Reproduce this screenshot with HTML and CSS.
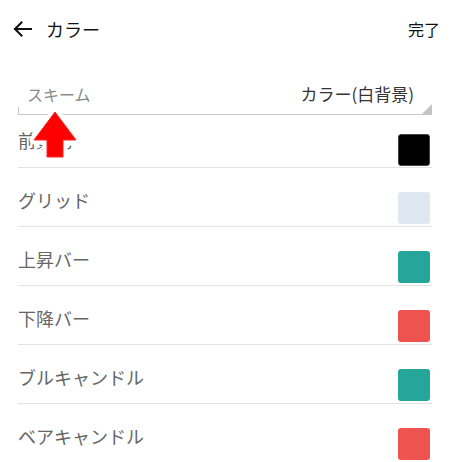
FILE: index.html
```html
<!DOCTYPE html>
<html lang="ja">
<head>
<meta charset="utf-8">
<link rel="stylesheet" href="styles.css">
</head>
<body>
<div class="page">
  <header class="topbar">
    <div class="title-wrap">
      <svg class="back" width="20" height="16" viewBox="0 0 20 16"><path d="M18 8H2M8.5 1.5L2 8l6.5 6.5" fill="none" stroke="#111" stroke-width="2" stroke-linecap="square"/></svg>
      <span class="title">カラー</span>
    </div>
    <span class="done">完了</span>
  </header>
  <div class="scheme">
    <span class="scheme-label">スキーム</span>
    <span class="scheme-value">カラー(白背景)</span>
    <span class="corner"></span>
  </div>
  <ul class="list">
    <li class="row first"><span class="label">前景色</span><span class="swatch black"></span></li>
    <li class="row"><span class="label">グリッド</span><span class="swatch grid"></span></li>
    <li class="row"><span class="label">上昇バー</span><span class="swatch green"></span></li>
    <li class="row"><span class="label">下降バー</span><span class="swatch red"></span></li>
    <li class="row"><span class="label">ブルキャンドル</span><span class="swatch green"></span></li>
    <li class="row"><span class="label">ベアキャンドル</span><span class="swatch red"></span></li>
  </ul>
  <svg class="pointer" width="60" height="62" viewBox="0 0 60 62">
    <polygon points="29,8 50,36 37,36 37,53 21,53 21,36 8,36" fill="#fff" stroke="#fff" stroke-width="9" stroke-linejoin="round"/>
    <polygon points="29,8 50,36 37,36 37,53 21,53 21,36 8,36" fill="#f00" stroke="#f22" stroke-width="1" stroke-linejoin="round"/>
  </svg>
</div>
</body>
</html>
```
FILE: styles.css
```css
* { box-sizing: border-box; margin: 0; padding: 0; }
body {
  background: #fff;
  font-family: "Noto Sans CJK JP", "Noto Sans", sans-serif;
  overflow: hidden;
}
.page {
  position: relative;
  width: 450px;
  height: 462px;
  padding: 0 18px;
}
.topbar {
  height: 58px;
  display: flex;
  align-items: center;
  justify-content: space-between;
  margin-left: -5px;
  margin-right: -8px;
}
.title-wrap {
  display: flex;
  align-items: center;
  gap: 13px;
}
.back { display: block; }
.title {
  font-size: 18px;
  color: #111;
  line-height: 24px;
}
.done {
  font-size: 16px;
  color: #111;
  line-height: 22px;
}
.scheme {
  position: relative;
  margin-top: 20px;
  height: 37px;
  display: flex;
  align-items: flex-start;
  justify-content: space-between;
  padding: 4px 18px 0 9px;
  border-bottom: 1px solid #c8c8c8;
}
.scheme::before {
  content: "";
  position: absolute;
  left: 0;
  bottom: 0;
  width: 1px;
  height: 7px;
  background: #c8c8c8;
}
.corner {
  position: absolute;
  right: 0;
  bottom: 0;
  width: 0;
  height: 0;
  border-left: 10px solid transparent;
  border-bottom: 10px solid #c4c4c4;
}
.scheme-label {
  font-size: 16px;
  color: #8a8a8a;
  line-height: 24px;
}
.scheme-value {
  font-size: 17px;
  color: #333;
  line-height: 24px;
}
.list { list-style: none; }
.row {
  height: 59px;
  display: flex;
  align-items: flex-end;
  justify-content: space-between;
  padding-bottom: 2px;
  border-bottom: 1px solid #e3e3e3;
}
.row.first { height: 53px; padding-bottom: 1px; }
.label {
  font-size: 18px;
  color: #666;
  line-height: 24px;
  margin-bottom: 12px;
}
.row.first .label { margin-bottom: 14px; }
.swatch {
  width: 32px;
  height: 32px;
  border-radius: 3px;
  margin-right: 2px;
}
.swatch.black { background: #000; border: 1px solid #444; }
.swatch.grid { background: #dfe8f0; }
.swatch.green { background: #26a69a; }
.swatch.red { background: #ef5350; }
.pointer {
  position: absolute;
  left: 26px;
  top: 104px;
}
```
